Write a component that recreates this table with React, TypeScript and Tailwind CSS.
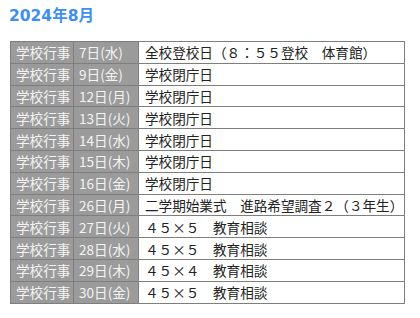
import React from 'react';

const rows: [string, string][] = [
  ['7日(水)', '全校登校日（８：５５登校　体育館）'],
  ['9日(金)', '学校閉庁日'],
  ['12日(月)', '学校閉庁日'],
  ['13日(火)', '学校閉庁日'],
  ['14日(水)', '学校閉庁日'],
  ['15日(木)', '学校閉庁日'],
  ['16日(金)', '学校閉庁日'],
  ['26日(月)', '二学期始業式　進路希望調査２（３年生）'],
  ['27日(火)', '４５×５　教育相談'],
  ['28日(水)', '４５×５　教育相談'],
  ['29日(木)', '４５×４　教育相談'],
  ['30日(金)', '４５×５　教育相談'],
];

export default function App() {
  return (
    <div
      className="w-[420px] h-[318px] bg-white pt-[5px] pl-[9px]"
      style={{ fontFamily: '"Noto Sans CJK JP", "DejaVu Sans", sans-serif' }}
    >
      <h2
        className="text-[15.5px] leading-[22px] font-bold text-[#3d8ff0]"
        style={{ fontFamily: '"DejaVu Sans", "Noto Sans CJK JP", sans-serif' }}
      >
        2024年8月
      </h2>
      <table className="mt-[14px] ml-px w-[395px] table-fixed border-collapse border border-[#c4c4c4] text-[13.6px] leading-[20px]">
        <colgroup>
          <col className="w-[63px]" />
          <col className="w-[65px]" />
          <col />
        </colgroup>
        <tbody>
          {rows.map(([day, text], i) => (
            <tr key={i} className="h-[21.8px]">
              <td className="bg-[#9b9b9b] text-[#f4f4f4] border border-[#7e7e7e] pl-[5px] pr-0 py-0 whitespace-nowrap">学校行事</td>
              <td className="bg-[#9b9b9b] text-[#f4f4f4] border border-[#7e7e7e] pl-[5px] pr-0 py-0 whitespace-nowrap">{day}</td>
              <td className="bg-white text-[#222] border border-[#7e7e7e] pl-[6px] pr-0 py-0 whitespace-nowrap">{text}</td>
            </tr>
          ))}
        </tbody>
      </table>
    </div>
  );
}
